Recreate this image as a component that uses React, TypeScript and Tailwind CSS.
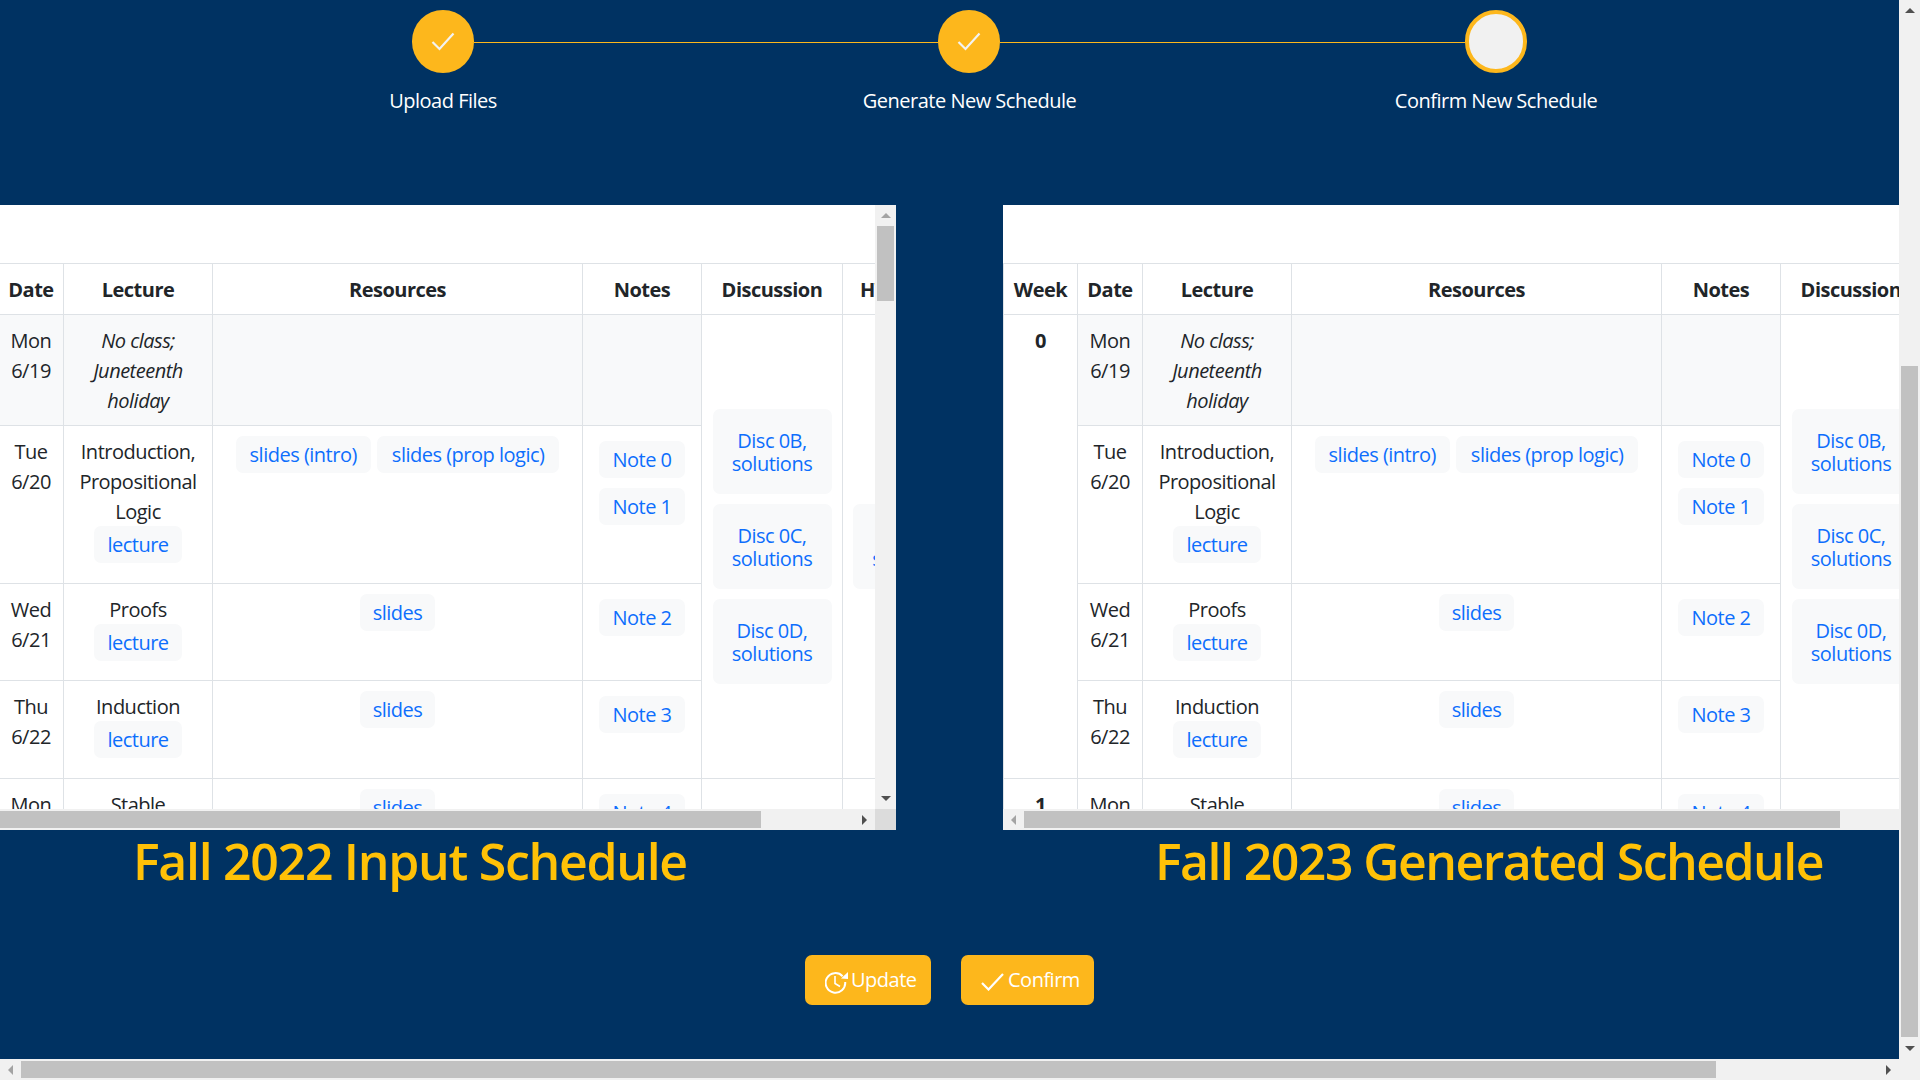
import React from "react";

const GOLD = "bg-[#fdb71c]";

function Tri({ dir, dim }: { dir: "up" | "down" | "left" | "right"; dim?: boolean }) {
  const pts = { up: "0,5 5,0 10,5", down: "0,0 10,0 5,5", left: "5,0 5,10 0,5", right: "0,0 5,5 0,10" }[dir];
  const horiz = dir === "left" || dir === "right";
  return (
    <svg width={horiz ? 5 : 10} height={horiz ? 10 : 5} viewBox={horiz ? "0 0 5 10" : "0 0 10 5"}>
      <polygon points={pts} fill={dim ? "#a3a3a3" : "#505050"} />
    </svg>
  );
}

function Btn({ children }: { children: React.ReactNode }) {
  return <div className="w-[21px] h-[21px] shrink-0 flex items-center justify-center">{children}</div>;
}

function Chip({ children, className = "px-[13px]" }: { children: React.ReactNode; className?: string }) {
  return (
    <a className={`inline-flex items-center justify-center h-[37px] rounded-[7px] bg-[#f8f9fa] text-[#0d6efd] whitespace-nowrap ${className}`}>
      {children}
    </a>
  );
}

function DiscChip({ a, b }: { a: string; b: string }) {
  return (
    <a className="flex flex-col items-center justify-center h-[85px] w-[119px] rounded-[7px] bg-[#f8f9fa] text-[#0d6efd] leading-[23px] shrink-0 pt-[1px]">
      <span>{a}</span>
      <span>{b}</span>
    </a>
  );
}

const td = "border border-[#dee2e6] p-[10px] align-top text-center";
const tdText = "border border-[#dee2e6] px-[10px] pt-[11px] pb-[9px] align-top text-center";
const th = "border border-[#dee2e6] align-middle pt-[2px]";
const shade = "bg-[#f8f9fa]";
const lecture = "px-[13px] -mt-[1px]";

function Schedule() {
  return (
    <table className="table-fixed border-collapse w-[998px] shrink-0 text-[20px] leading-[30px] text-[#212529] mt-[58px]">
      <colgroup>
        <col className="w-[74px]" />
        <col className="w-[65px]" />
        <col className="w-[149px]" />
        <col className="w-[370px]" />
        <col className="w-[119px]" />
        <col className="w-[141px]" />
        <col className="w-[80px]" />
      </colgroup>
      <thead>
        <tr className="h-[51px] font-semibold">
          <th className={`${th} whitespace-nowrap`}>Week</th>
          <th className={th}>Date</th>
          <th className={th}>Lecture</th>
          <th className={th}>Resources</th>
          <th className={th}>Notes</th>
          <th className={`${th} whitespace-nowrap`}>Discussion</th>
          <th className={`${th} text-left pl-[17px] whitespace-nowrap`}>HW</th>
        </tr>
      </thead>
      <tbody>
        <tr className="h-[111px]">
          <td rowSpan={4} className={`${tdText} font-bold`}>0</td>
          <td className={`${tdText} ${shade}`}>Mon<br />6/19</td>
          <td className={`${tdText} ${shade} italic`}>No class;<br />Juneteenth<br />holiday</td>
          <td className={`${td} ${shade}`}></td>
          <td className={`${td} ${shade}`}></td>
          <td rowSpan={4} className={`${td} !align-middle`}>
            <div className="flex flex-col items-center gap-[10px]">
              <DiscChip a="Disc 0B," b="solutions" />
              <DiscChip a="Disc 0C," b="solutions" />
              <DiscChip a="Disc 0D," b="solutions" />
            </div>
          </td>
          <td rowSpan={4} className={`${td} !align-middle !pr-0`}>
            <DiscChip a="HW 1," b="solutions" />
          </td>
        </tr>
        <tr className="h-[158px]">
          <td className={tdText}>Tue<br />6/20</td>
          <td className={tdText}>
            Introduction,<br />Propositional<br />Logic
            <br />
            <Chip className={lecture}>lecture</Chip>
          </td>
          <td className={td}>
            <div className="flex justify-center gap-[6px]">
              <Chip className="px-[14px]">slides (intro)</Chip>
              <Chip className="px-[15px]">slides (prop logic)</Chip>
            </div>
          </td>
          <td className={td}>
            <div className="flex flex-col items-center gap-[10px] pt-[5px]">
              <Chip>Note 0</Chip>
              <Chip>Note 1</Chip>
            </div>
          </td>
        </tr>
        <tr className="h-[97px]">
          <td className={tdText}>Wed<br />6/21</td>
          <td className={tdText}>Proofs<br /><Chip className={lecture}>lecture</Chip></td>
          <td className={td}><Chip>slides</Chip></td>
          <td className={td}><div className="pt-[5px]"><Chip>Note 2</Chip></div></td>
        </tr>
        <tr className="h-[98px]">
          <td className={tdText}>Thu<br />6/22</td>
          <td className={tdText}>Induction<br /><Chip className={lecture}>lecture</Chip></td>
          <td className={td}><Chip>slides</Chip></td>
          <td className={td}><div className="pt-[5px]"><Chip>Note 3</Chip></div></td>
        </tr>
        <tr className="h-[97px]">
          <td className={`${tdText} font-bold`}>1</td>
          <td className={tdText}>Mon<br />6/26</td>
          <td className={tdText}>Stable<br />Matching</td>
          <td className={td}><Chip>slides</Chip></td>
          <td className={td}><div className="pt-[5px]"><Chip>Note 4</Chip></div></td>
          <td className={td}></td>
          <td className={td}></td>
        </tr>
      </tbody>
    </table>
  );
}

function StepCheck() {
  return (
    <div className={`w-[62px] h-[63px] rounded-full ${GOLD} flex items-center justify-center shrink-0`}>
      <svg width="24" height="19" viewBox="0 0 24 19" fill="none" stroke="#f3f3f3" strokeWidth="2.2">
        <path d="M1.5 10 L8.5 17 L22.5 1.5" />
      </svg>
    </div>
  );
}

export default function App() {
  return (
    <div className="flex w-screen h-screen overflow-hidden font-['Open_Sans','Noto_Sans',sans-serif] tracking-[-0.5px]">
      <div className="flex flex-col w-[1899px] shrink-0">
        <main className="flex-1 bg-[#003262] overflow-hidden pt-[10px]">
          <div className="flex items-center ml-[412px]">
            <StepCheck />
            <div className="w-[464px] h-[1px] mt-[2px] bg-[#fdb71c]" />
            <StepCheck />
            <div className="w-[465px] h-[1px] mt-[2px] bg-[#fdb71c]" />
            <div className="w-[62px] h-[63px] rounded-full bg-[#f1f1f1] border-[4px] border-[#fdb71c] shrink-0" />
          </div>
          <div className="grid grid-cols-[526px_527px_526px] ml-[180px] mt-[13px] text-[20px] leading-[30px] text-white text-center">
            <div>Upload Files</div>
            <div>Generate New Schedule</div>
            <div>Confirm New Schedule</div>
          </div>

          <div className="flex gap-[107px] mt-[89px]">
            <section className="w-[896px] h-[625px] bg-white flex flex-col shrink-0">
              <div className="flex flex-1 min-h-0">
                <div className="flex-1 overflow-hidden">
                  <div className="-ml-[76px]">
                    <Schedule />
                  </div>
                </div>
                <div className="w-[21px] bg-[#f1f1f1] flex flex-col items-center">
                  <Btn><Tri dir="up" dim /></Btn>
                  <div className="w-[17px] h-[75px] bg-[#c1c1c1]" />
                  <div className="flex-1" />
                  <Btn><Tri dir="down" /></Btn>
                </div>
              </div>
              <div className="h-[21px] bg-[#f1f1f1] flex items-center">
                <div className="w-[761px] h-[17px] bg-[#c1c1c1]" />
                <div className="flex-1" />
                <Btn><Tri dir="right" /></Btn>
                <div className="w-[21px] h-[21px] bg-[#dcdcdc]" />
              </div>
            </section>
            <section className="w-[896px] h-[625px] bg-white flex flex-col shrink-0">
              <div className="flex-1 min-h-0 overflow-hidden">
                <Schedule />
              </div>
              <div className="h-[21px] bg-[#f1f1f1] flex items-center">
                <Btn><Tri dir="left" dim /></Btn>
                <div className="w-[816px] h-[17px] bg-[#c1c1c1]" />
              </div>
            </section>
          </div>

          <div className="flex mt-[1px] text-[50px] leading-[60px] font-semibold text-[#ffc107] whitespace-nowrap">
            <h1 className="ml-[133px] w-[1022px] tracking-[-1.3px]">Fall 2022 Input Schedule</h1>
            <h1 className="tracking-[-1.55px]">Fall 2023 Generated Schedule</h1>
          </div>

          <div className="flex justify-center gap-[30px] mt-[64px] text-[20px] leading-[30px] text-white">
            <button className={`w-[126px] h-[50px] rounded-[7px] ${GOLD} flex items-center pl-[20px] gap-[3px]`}>
              <svg width="23" height="22" viewBox="0 0 23 22" fill="none" className="shrink-0 mt-[5px]">
                <path d="M17.6 4.2 A9.8 9.8 0 1 0 20.2 10" stroke="white" strokeWidth="2" />
                <polygon points="23,0 23,7 16,6.4" fill="white" />
                <path d="M10 4 V11.5 L15 14.5" stroke="white" strokeWidth="1.6" />
              </svg>
              <span>Update</span>
            </button>
            <button className={`w-[133px] h-[50px] rounded-[7px] ${GOLD} flex items-center pl-[20px] gap-[4px]`}>
              <svg width="23" height="18" viewBox="0 0 23 18" fill="none" className="shrink-0 mt-[3px]">
                <path d="M1 10 L7.5 16.5 L22 1" stroke="white" strokeWidth="2.2" />
              </svg>
              <span>Confirm</span>
            </button>
          </div>
        </main>
        <div className="h-[21px] bg-[#f1f1f1] flex items-center shrink-0">
          <Btn><Tri dir="left" dim /></Btn>
          <div className="w-[1695px] h-[17px] bg-[#c1c1c1]" />
          <div className="flex-1" />
          <Btn><Tri dir="right" /></Btn>
        </div>
      </div>
      <div className="w-[21px] bg-[#f1f1f1] flex flex-col items-center">
        <Btn><Tri dir="up" /></Btn>
        <div className="h-[345px] shrink-0" />
        <div className="w-[17px] h-[671px] bg-[#c1c1c1] shrink-0" />
        <div className="flex-1" />
        <Btn><Tri dir="down" /></Btn>
        <div className="h-[21px] shrink-0" />
      </div>
    </div>
  );
}
